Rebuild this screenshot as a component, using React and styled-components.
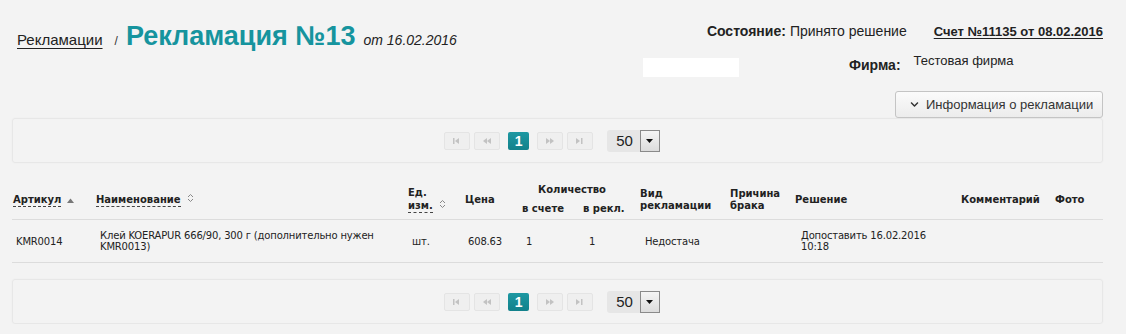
import styled, { createGlobalStyle } from 'styled-components'
import { FaChevronDown } from 'react-icons/fa'

const GlobalStyle = createGlobalStyle`
  body {
    margin: 0;
    background: #f3f3f3;
    font-family: "Liberation Sans", Arial, sans-serif;
    color: #222;
  }
`

const Page = styled.div`
  width: 1091px;
  padding: 0 23px 0 12px;
`

const Header = styled.div`
  display: flex;
  justify-content: space-between;
  align-items: flex-start;
  height: 91px;
`

const TitleBlock = styled.div`
  display: flex;
  align-items: baseline;
  padding: 21px 0 0 5px;
`

const Crumb = styled.a`
  font-size: 15px;
  color: #222;
  text-decoration: underline;
  text-underline-offset: 3px;
`

const Slash = styled.span`
  font-size: 12px;
  margin: 0 8px 0 12px;
  color: #333;
`

const Title = styled.h1`
  margin: 0;
  font-size: 27px;
  font-weight: bold;
  color: #16949e;
`

const TitleDate = styled.span`
  font-size: 14px;
  font-style: italic;
  margin-left: 8px;
  color: #222;
`

const Info = styled.div`
  display: flex;
  flex-direction: column;
  padding-top: 23px;
  width: 460px;
`

const InfoRow = styled.div`
  display: flex;
  align-items: ${p => p.$align || 'center'};
  justify-content: ${p => p.$justify || 'flex-start'};
  margin-top: ${p => p.$mt || 0}px;
  font-size: 14px;
`

const Label = styled.b`
  font-weight: bold;
  margin-right: ${p => p.$gap || 4}px;
  margin-top: ${p => p.$mt || 0}px;
`

const InvoiceLink = styled.a`
  margin-left: 27px;
  font-size: 13px;
  font-weight: bold;
  color: #222;
  text-decoration: underline;
  text-underline-offset: 2px;
`

const Blank = styled.div`
  width: 96px;
  height: 19px;
  background: #fff;
  margin-right: 110px;
  margin-top: 7px;
`

const FirmValue = styled.span`
  font-size: 13px;
  margin-top: 2px;
`

const ButtonRow = styled.div`
  display: flex;
  justify-content: flex-end;
`

const InfoButton = styled.button`
  display: flex;
  align-items: center;
  gap: 7px;
  height: 27px;
  width: 208px;
  padding: 0 0 0 14px;
  border: 1px solid #c4c4c4;
  border-radius: 3px;
  background: linear-gradient(#fbfbfb, #ececec);
  font-family: "Liberation Sans", Arial, sans-serif;
  font-size: 13px;
  color: #333;
`

const Pager = styled.div`
  display: flex;
  justify-content: center;
  align-items: center;
  height: 43px;
  border: 1px solid #e7e7e7;
  border-radius: 3px;
  box-shadow: 0 0 2px rgba(0, 0, 0, 0.04);
  margin-top: ${p => p.$mt || 0}px;
`

const PageButtons = styled.div`
  display: flex;
  align-items: center;
  gap: 4px;
  margin-left: -11px;
`

const NavButton = styled.span`
  box-sizing: border-box;
  display: flex;
  align-items: center;
  justify-content: center;
  width: 26px;
  height: 18px;
  border: 1px solid #e4e4e4;
  border-radius: 2px;
  background: #efefef;
`

const CurrentPage = styled.span`
  display: flex;
  align-items: center;
  justify-content: center;
  width: 21px;
  height: 18px;
  margin: 0 4px;
  border-radius: 2px;
  background: linear-gradient(#1d98a2, #12818b);
  color: #fff;
  font-size: 14px;
  font-weight: bold;
`

const SizeSelect = styled.div`
  display: flex;
  align-items: center;
  height: 22px;
  margin-left: 14px;
  background: #e6e6e6;
  border-radius: 3px 0 0 3px;
  font-size: 15px;
  color: #222;
`

const SizeValue = styled.span`
  padding: 0 7px 0 9px;
`

const SizeArrow = styled.span`
  box-sizing: border-box;
  display: flex;
  align-items: center;
  justify-content: center;
  width: 20px;
  height: 22px;
  border: 1px solid #8a8a8a;
  background: linear-gradient(#f5f5f5, #dcdcdc);
`

const Table = styled.table`
  width: 1091px;
  table-layout: fixed;
  border-collapse: collapse;
  margin-top: 17px;
  font-family: "DejaVu Sans", Verdana, sans-serif;
  font-size: 10px;
  color: #222;
`

const Th = styled.th`
  font-weight: bold;
  text-align: ${p => p.$center ? 'center' : 'left'};
  vertical-align: middle;
  padding: ${p => p.$pad || '0 2px 0 1px'};
  height: ${p => p.$h || 'auto'};
  line-height: 12px;
  border-bottom: ${p => p.$line ? '1px solid #dcdcdc' : 'none'};
  white-space: nowrap;
`

const Td = styled.td`
  padding: 0 2px 0 ${p => p.$pl || 4}px;
  height: 42px;
  vertical-align: middle;
  line-height: 11px;
  letter-spacing: -0.17px;
  border-bottom: 1px solid #dcdcdc;
`

const Sortable = styled.span`
  border-bottom: 1px dashed #444;
  padding-bottom: 1px;
`

const SortIcon = styled.span`
  display: inline-block;
  margin-left: 6px;
  vertical-align: middle;
`

const NavIcon = ({ type }) => {
  const c = '#c2c2c2'
  const shapes = {
    first: <><rect x="1" y="1" width="1.5" height="6" fill={c} /><path d="M3 4 L7 1 L7 7 Z" fill={c} /></>,
    prev: <><path d="M1 4 L5 1 L5 7 Z" fill={c} /><path d="M5 4 L9 1 L9 7 Z" fill={c} /></>,
    next: <><path d="M1 1 L5 4 L1 7 Z" fill={c} /><path d="M5 1 L9 4 L5 7 Z" fill={c} /></>,
    last: <><path d="M1 1 L5 4 L1 7 Z" fill={c} /><rect x="6" y="1" width="1.5" height="6" fill={c} /></>,
  }
  return <svg width="10" height="8" viewBox="0 0 10 8">{shapes[type]}</svg>
}

const UpDown = () => (
  <svg width="7" height="10" viewBox="0 0 7 10">
    <path d="M1 4 L3.5 1.5 L6 4" stroke="#888" strokeWidth="1" fill="none" />
    <path d="M1 6 L3.5 8.5 L6 6" stroke="#888" strokeWidth="1" fill="none" />
  </svg>
)

const SortUp = () => (
  <svg width="7" height="5" viewBox="0 0 7 5">
    <path d="M0 5 L3.5 0.5 L7 5 Z" fill="#777" />
  </svg>
)

function Pagination({ mt }) {
  return (
    <Pager $mt={mt}>
      <PageButtons>
        <NavButton><NavIcon type="first" /></NavButton>
        <NavButton><NavIcon type="prev" /></NavButton>
        <CurrentPage>1</CurrentPage>
        <NavButton><NavIcon type="next" /></NavButton>
        <NavButton><NavIcon type="last" /></NavButton>
      </PageButtons>
      <SizeSelect>
        <SizeValue>50</SizeValue>
        <SizeArrow>
          <svg width="7" height="4" viewBox="0 0 7 4"><path d="M0 0 L7 0 L3.5 4 Z" fill="#111" /></svg>
        </SizeArrow>
      </SizeSelect>
    </Pager>
  )
}

const columns = [83, 312, 57, 55, 61, 59, 90, 65, 166, 94, 49]

export default function App() {
  return (
    <Page>
      <GlobalStyle />
      <Header>
        <TitleBlock>
          <Crumb href="#">Рекламации</Crumb>
          <Slash>/</Slash>
          <Title>Рекламация №13</Title>
          <TitleDate>от 16.02.2016</TitleDate>
        </TitleBlock>
        <Info>
          <InfoRow $justify="flex-end">
            <Label>Состояние:</Label> Принято решение
            <InvoiceLink href="#">Счет №11135 от 08.02.2016</InvoiceLink>
          </InfoRow>
          <InfoRow $mt={12} $align="flex-start">
            <Blank />
            <Label $gap={13} $mt={6}>Фирма:</Label>
            <FirmValue>Тестовая фирма</FirmValue>
          </InfoRow>
        </Info>
      </Header>
      <ButtonRow>
        <InfoButton><FaChevronDown size={9} /> Информация о рекламации</InfoButton>
      </ButtonRow>
      <Pagination />
      <Table>
        <colgroup>
          {columns.map((w, i) => <col key={i} style={{ width: w }} />)}
        </colgroup>
        <thead>
          <tr>
            <Th rowSpan={2} $line><Sortable>Артикул</Sortable><SortIcon><SortUp /></SortIcon></Th>
            <Th rowSpan={2} $line><Sortable>Наименование</Sortable><SortIcon><UpDown /></SortIcon></Th>
            <Th rowSpan={2} $line>Ед.<br /><Sortable>изм.</Sortable><SortIcon><UpDown /></SortIcon></Th>
            <Th rowSpan={2} $line>Цена</Th>
            <Th colSpan={2} $center $h="19px" $pad="0 14px 0 0">Количество</Th>
            <Th rowSpan={2} $line>Вид<br />рекламации</Th>
            <Th rowSpan={2} $line>Причина<br />брака</Th>
            <Th rowSpan={2} $line>Решение</Th>
            <Th rowSpan={2} $line>Комментарий</Th>
            <Th rowSpan={2} $line>Фото</Th>
          </tr>
          <tr>
            <Th $line $h="20px" $pad="0 0 0 3px">в счете</Th>
            <Th $line $h="20px" $pad="0 0 0 3px">в рекл.</Th>
          </tr>
        </thead>
        <tbody>
          <tr>
            <Td>KMR0014</Td>
            <Td $pl={5}>Клей KOERAPUR 666/90, 300 г (дополнительно нужен KMR0013)</Td>
            <Td $pl={5}>шт.</Td>
            <Td $pl={4}>608.63</Td>
            <Td $pl={7}>1</Td>
            <Td $pl={9}>1</Td>
            <Td $pl={6}>Недостача</Td>
            <Td />
            <Td $pl={7}>Допоставить 16.02.2016<br />10:18</Td>
            <Td />
            <Td />
          </tr>
        </tbody>
      </Table>
      <Pagination mt={16} />
    </Page>
  )
}
